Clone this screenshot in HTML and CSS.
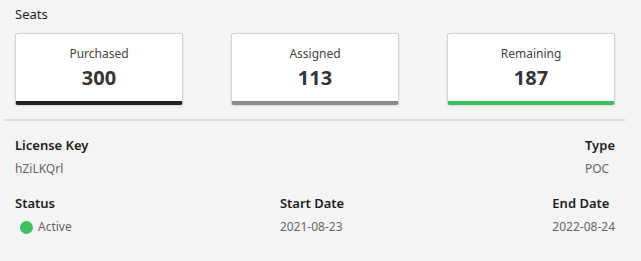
FILE: index.html
```html
<!DOCTYPE html>
<html lang="en">
<head>
    <meta charset="UTF-8">
    <meta name="viewport" content="width=device-width, initial-scale=1.0">
    <title>License Details</title>
    <link rel="stylesheet" href="styles.css">
</head>
<body>

<div class="panel">
    <div class="section">
        <h2 class="section-title">Seats</h2>
        <div class="seat-cards">
            <div class="seat-card purchased">
                <div class="seat-label">Purchased</div>
                <div class="seat-count">300</div>
            </div>
            <div class="seat-card assigned">
                <div class="seat-label">Assigned</div>
                <div class="seat-count">113</div>
            </div>
            <div class="seat-card remaining">
                <div class="seat-label">Remaining</div>
                <div class="seat-count">187</div>
            </div>
        </div>
    </div>

    <div class="section details">
        <div class="detail-row">
            <div class="field">
                <div class="field-name">License Key</div>
                <div class="field-value">hZiLKQrl</div>
            </div>
            <div class="field">
                <div class="field-name">Type</div>
                <div class="field-value">POC</div>
            </div>
        </div>
        <div class="detail-row">
            <div class="field">
                <div class="field-name">Status</div>
                <div class="field-value status"><span class="status-dot"></span>Active</div>
            </div>
            <div class="field">
                <div class="field-name">Start Date</div>
                <div class="field-value">2021-08-23</div>
            </div>
            <div class="field">
                <div class="field-name">End Date</div>
                <div class="field-value">2022-08-24</div>
            </div>
        </div>
    </div>
</div>

</body>
</html>
```

FILE: styles.css
```css
body {
    margin: 0;
    background-color: #f4f4f4;
    font-family: 'Noto Sans', 'Open Sans', sans-serif;
    color: #1e1e1e;
}

.panel {
    width: 620px;
    margin-left: 5px;
}

.section {
    padding: 0 10px;
    border-bottom: 2px solid #d8d8d8;
}

.section-title {
    margin: 0;
    padding-top: 4px;
    font-size: 13px;
    font-weight: 400;
    line-height: 20px;
}

.seat-cards {
    display: flex;
    justify-content: space-between;
    margin-top: 9px;
    margin-bottom: 14px;
}

.seat-card {
    width: 168px;
    height: 72px;
    box-sizing: border-box;
    background-color: #fff;
    border: 1px solid #d2d2d2;
    border-bottom: 4px solid #23222c;
    border-radius: 3px;
    box-shadow: 0 1px 2px rgba(0, 0, 0, 0.12);
    text-align: center;
}

.seat-card.assigned {
    border-bottom-color: #8a8a8a;
}

.seat-card.remaining {
    border-bottom-color: #3dbf5e;
}

.seat-label {
    margin-top: 11px;
    font-size: 12px;
    line-height: 17px;
    color: #444;
}

.seat-count {
    margin-top: 2px;
    font-size: 20px;
    font-weight: 700;
    line-height: 28px;
    color: #353535;
}

.details {
    padding-top: 14px;
    padding-bottom: 10px;
}

.detail-row {
    display: flex;
    justify-content: space-between;
    margin-bottom: 14px;
}

.field-name {
    font-size: 13px;
    font-weight: 600;
    line-height: 20px;
}

.field-value {
    margin-top: 4px;
    font-size: 12px;
    line-height: 20px;
    color: #666;
}

.status {
    display: flex;
    align-items: center;
    padding-left: 5px;
}

.status-dot {
    width: 13px;
    height: 13px;
    margin-right: 5px;
    border-radius: 50%;
    background-color: #3dbf5e;
}
```
